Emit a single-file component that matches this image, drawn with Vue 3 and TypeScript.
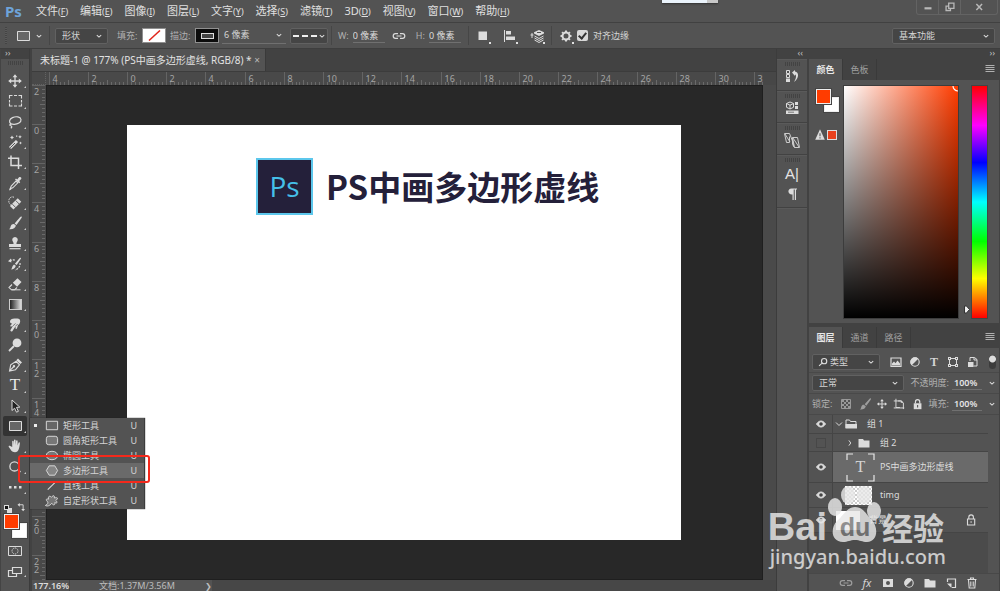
<script setup lang="ts">
import { computed, h, onBeforeUnmount, onMounted, ref } from 'vue'
import type { FunctionalComponent } from 'vue'

interface Shape {
  d: string
  fill?: string
  stroke?: string
  w?: number
  dash?: string
}

const LIGHT = '#dcdcdc'
const line = (d: string, w = 1, dash?: string): Shape => ({ d, fill: 'none', stroke: LIGHT, w, dash })
const solid = (d: string, fill = LIGHT): Shape => ({ d, fill })

const icons: Record<string, Shape[]> = {
  move: [line('M8 3v10M3 8h10', 1.3), solid('M8 1.2l2.4 3H5.6zM8 14.8l2.4-3H5.6zM1.2 8l3-2.4v4.8zM14.8 8l-3-2.4v4.8z')],
  marquee: [line('M2.5 5.5v-3h3M7 2.5h3M11.5 2.5h3v3M14.5 7v2.500M14.500 10.500v2.500h-3M10 13H7M5.500 13h-3v-2.500M2.500 9.500V7', 1.1)],
  lasso: [line('M4.200 9.800C1.600 8.500 2 5.200 5.500 3.600 9 2 13.500 2.700 14 5.500c.4 3-3.500 5-7.200 4.800-2-.1-3.800-.6-4 .5-.2 1.300 2.300.7 2 2-.1.700-.6 1.100-1 1.400', 1.2)],
  wand: [line('M3 14L10 7', 3), { d: 'M3.200 13.800L8 9', fill: 'none', stroke: '#535353', w: 1 }, solid('M5 1.500l.7 1.300 1.300.7-1.300.7L5 5.500l-.7-1.300L3 3.500l1.300-.7zM13 1l.6 1.200 1.200.6-1.200.6L13 4.600l-.6-1.200-1.200-.6 1.200-.6zM13.500 7.500l.5 1 1 .5-1 .5-.5 1-.5-1-1-.5 1-.5zM9 1.500h1.300v1.300H9z')],
  crop: [line('M4 1.500V11.500H15M1 4.200h10.500V15', 1.5)],
  eyedropper: [line('M9 6l1.800 1.800-5 5-2.600 1 1-2.700z', 1.1), solid('M2 15.500l1-2.500 1.500 1.500zM8 4.500l1-1 1.200 1L12 2.300c1.400-1.200 3.300.6 2 2L12.200 6l1 1.200-1 1z')],
  heal: [line('M7 2.200C4 1 1.500 3.500 1.800 6.500c.1 1.500 1 2.500 1.700 3', 1, '1.500 1'), line('M4.700 12.700L12.500 4.900', 5), { d: 'M5.200 9l3.600 3.600M8.700 5.500l3.500 3.500M7 8.700h.1M9 8.600h.1M8.500 10.300h.1', fill: 'none', stroke: '#606060', w: 1 }],
  brush: [solid('M14.500 1.500c.5.300.4.900 0 1.600L9.500 10 7.600 8.400 13 2.200c.5-.6 1-.9 1.500-.7zM7 9l1.900 1.600C8.500 13.300 5.500 14.700 2 14.200c1.500-.8 1.300-1.700 1.700-2.900C4.300 9.500 5.500 8.800 7 9z')],
  stamp: [solid('M8 2a2.800 2.800 0 0 1 2.200 4.500c-.7.900-.8 1.500-.7 2.500H14v3H2V9h4.500c.1-1 0-1.600-.7-2.500A2.800 2.800 0 0 1 8 2z'), line('M2.500 13.700h11', 1.2)],
  history: [solid('M13.700 1.800c.5.300.3.800 0 1.300l-4 6-1.800-1.300 4.600-5.500c.4-.5.8-.7 1.200-.5zM7 8.500l1.800 1.300c-.3 2.300-2.500 3.600-4.700 3.700 1.200-1 .9-3.800 2.900-5zM1 5.200l3-2.700.4 4z'), line('M3 5c2-1.500 4-1.500 5.500-.5M13 7c.5 3-1.500 6-5 7', 1.2, '2 1')],
  eraser: [line('M5 8.500l-3 3 2.500 2.300h3L10 11.500', 1.1), solid('M10.500 2.300l4 3.800-4.400 4.600-4.300-4z'), line('M4.500 13.800h9', 1)],
  smudge: [solid('M3 4.500c0-2 2-2.800 4.500-3 2.500-.2 5 0 5.500 1.500.6 2-.3 4-2 5.200l-1 3c-.3 1-1.500.9-1.500 0l.2-2.300-3.200 5c-.7 1-2.600.5-2-.9L6 8.700l-1.500.8c-1 .5-1.600-.7-.9-1.300l1.700-1.700C4 6.500 3 6 3 4.500z'), { d: 'M6 8.800l2.500-2.300M8.700 9l2-2', fill: 'none', stroke: '#606060', w: 0.8 }],
  dodge: [solid('M10 1.500a4.400 4.400 0 1 1 0 8.800 4.400 4.400 0 0 1 0-8.800z'), line('M7 9L2 14', 1.8)],
  pen: [line('M2.500 14l1.200-6.200 5.500-3.500 3.300 3.500-4 4.900zM2.800 13.600L7.300 9', 1.1), solid('M9.300 3.200l1.700-1.700 4 4-1.700 1.600zM7 8a1.200 1.200 0 1 1 0 2.400A1.200 1.200 0 0 1 7 8z')],
  arrow: [{ d: 'M5 2v10.500l2.600-2.300 1.900 4 1.900-.9-1.900-3.900 3.300-.3z', fill: '#222', stroke: LIGHT, w: 1 }],
  rect: [{ d: 'M2.500 3.500h12v9h-12z', fill: '#666', stroke: LIGHT, w: 1 }],
  hand: [solid('M5.200 9V3.600c0-1 1.400-1 1.500 0L7 7V2.300c0-1 1.500-1 1.600 0V7l.5-4c.1-1 1.500-.9 1.500.1v4.500l.9-2.800c.3-.9 1.500-.6 1.400.4-.4 4-1 9-4.900 9-3.500 0-4-2.400-6.200-5.200-.6-.9.600-1.600 1.400-1z')],
  zoom: [line('M7.500 2.800a4.600 4.600 0 1 1 0 9.200 4.600 4.600 0 0 1 0-9.200zM11 10.500l2.500 2.500', 1.3)],
  dots: [solid('M2 7h2.500v2.500H2zM7 7h2.500v2.500H7zM12 7h2.500v2.500H12z')],
  mask: [line('M1.500 3.500h13v9h-13z', 1), line('M8 5a3 3 0 1 1 0 6 3 3 0 0 1 0-6z', 1, '1.200 .8')],
  screen: [line('M5.500 3.500h9v6h-9z', 1.2), line('M5.500 6.500h-4v6h8v-3', 1.2)],
  roundrect: [{ d: 'M5 3.500h7q2.500 0 2.500 2.500v4q0 2.500-2.500 2.500H5q-2.500 0-2.500-2.500V6q0-2.500 2.500-2.500z', fill: '#777', stroke: LIGHT, w: 1 }],
  ellipse: [{ d: 'M8.500 3.500c8 0 8 9 0 9s-8-9 0-9z', fill: '#777', stroke: LIGHT, w: 1 }],
  polygon: [{ d: 'M5.500 3h6l3 5-3 5h-6l-3-5z', fill: '#868686', stroke: LIGHT, w: 1 }],
  diag: [line('M4 12.500l9-9', 1.1)],
  custom: [{ d: 'M8 4.500c2-2.500 3.500-2 3 .8 4-1 4.500.5 1.500 2.700 2.500 2 1.500 3.200-1 2.200.5 3-1.500 3.300-3.300.8-2.200 3-5 3.300-6.700 2.300C4 12 4.800 10.500 3.500 9 1.500 7 2.500 6 5 6.500 4 3.500 6 2.500 8 4.500z', fill: '#777', stroke: LIGHT, w: 1 }],
  chain: [line('M7 5.700H4.500a2.300 2.300 0 0 0 0 4.600H7M9 5.700h2.500a2.300 2.300 0 0 1 0 4.600H9M5.500 8h5', 1.2)],
  square: [solid('M3.500 3.500h8.500V12H3.500z')],
  align: [line('M2.500 2v12', 1), solid('M4 3h5v3.500H4zM4 8.500h9V12H4z')],
  arrange: [line('M3 5v5M1.500 7h3', 1), solid('M10 2l5 2.200v1.300L10 8 5 5.500V4.200z'), { d: 'M8 4.500h4', fill: 'none', stroke: '#535353', w: 1 }, line('M5.500 8L10 10.500 14.500 8M5.500 10l4.500 2.500 4.500-2.500M5.500 12l4.500 2.500 4.500-2.500', 1)],
  gear: [line('M8 4.500a3.500 3.500 0 1 1 0 7 3.500 3.500 0 0 1 0-7z', 2), line('M8 2.500V4M8 12v1.500M2.500 8H4M12 8h1.500M4.100 4.100l1 1M10.900 10.900l1 1M4.100 11.900l1-1M10.900 5.100l1-1', 2)],
  versions: [line('M2.500 2.500h3v3h-3zM2.500 6.500h3v3h-3z', 1), solid('M2 10.500h4V14H2zM8 4.500L11 2v1.500c4 .5 4.500 6.500-1 10.500 2.500-4 2.500-7 1-7.500V8z')],
  props: [line('M6 2l3.500 1.500v3.800L6 9 2.500 7.300V3.500zM2.500 3.500L6 5.200l3.500-1.700M6 5.200V9', 1), solid('M11 2h3v3h-3zM11 6h3v3h-3z'), solid('M2 10.500h12.500v3.500H2z'), { d: 'M4 12.200h6', fill: 'none', stroke: '#777', w: 1 }],
  para: [solid('M7.500 2.500H13v1h-1V14h-1.200V3.500H9.700V14H8.500V8.500C3.500 9 3 2.500 7.500 2.500z')],
  image: [line('M3 4h10v8.500H3z', 1.2), solid('M4 11.500V9.500l2-2 1.500 1.700 2-2.700L12 9.500v2z')],
  contrast: [line('M8 3.800a4.200 4.200 0 1 1 0 8.400 4.200 4.200 0 0 1 0-8.400z', 1.1), solid('M11.300 4.700a4.400 4.400 0 0 0-6.600 6.600z')],
  transform: [line('M4.500 4.500h7v7h-7z', 1), solid('M3 3h3v3H3zM10 3h3v3h-3zM3 10h3v3H3zM10 10h3v3h-3z'), solid('M4 4h1v1H4zM11 4h1v1h-1zM4 11h1v1H4zM11 11h1v1h-1z', '#535353')],
  smart: [line('M6 7V3.500h4.500l2.500 2V12H9.500M10 3.500V6h3', 1), solid('M4 8h5.500v5H4z')],
  checker: [{ d: 'M3.500 3.500h9v9h-9z', fill: 'none', stroke: '#999', w: 1 }, solid('M4 4h2v2H4zM8 4h2v2H8zM6 6h2v2H6zM10 6h2v2h-2zM4 8h2v2H4zM8 8h2v2H8zM6 10h2v2H6zM10 10h2v2h-2z', '#999')],
  board: [line('M4.500 2v10H9M2 4.500h8M7 4.500h3.500l2.500 2.300v7M2 12.500h12', 1.1), solid('M10 3.500l3.200 3.200H10z')],
  lock: [line('M5.800 7V5.200a2.300 2.300 0 0 1 4.600 0V7', 1.3), solid('M4 6.700h8.200v6.300H4z'), solid('M7.500 8.500h1.200v2.700H7.500z', '#555')],
  lockline: [line('M5.800 7V5.200a2.300 2.300 0 0 1 4.600 0V7M4.500 7h7.200v6H4.500zM8.100 9.200v1.600', 1.1)],
  eye: [{ d: 'M3.500 8c2.500-4 6.500-4 9 0-2.500 4-6.500 4-9 0z', fill: LIGHT, stroke: LIGHT, w: 1 }, solid('M8 6.200a1.800 1.800 0 1 1 0 3.600 1.800 1.800 0 0 1 0-3.600z', '#444')],
  folder: [solid('M2.500 4h4.500l1 1.500h5.500V12.500h-11z')],
  open: [line('M3 12V4h3.500l1 1.500h5.500V8', 1), solid('M2.500 8h11.500v4.500H2.500z')],
  search: [line('M9.300 4a3 3 0 1 1 0 6 3 3 0 0 1 0-6zM7 9.200L3.500 12.500', 1.3)],
  addmask: [{ d: 'M3 4h10v8H3zM8 6a2 2 0 1 0 0 4 2 2 0 0 0 0-4z', fill: LIGHT }],
  newlayer: [line('M4.500 7V4h8v8.500H9', 1.2), solid('M4 8.500h4.500v4.500z')],
  trash: [line('M3.500 4.500h9M6.500 4V3h3v1M4.500 5l.7 8h5.600l.7-8M6.800 6.500v5M9.200 6.500v5', 1.1)],
  menu: [{ d: 'M3.500 4.500h9M3.500 6.500h9M3.500 8.500h9M3.500 10.500h9', fill: 'none', stroke: '#b0b0b0', w: 1 }],
  chev: [line('M5.500 7L8 9.300 10.500 7', 1.2)],
  chevr: [line('M6.500 4.500L9 8l-2.500 3.500', 1.3)],
  chevd: [line('M4 6l4 4 4-4', 1.3)],
  swap: [line('M4 5h5.500v6', 1.2), solid('M5 2.500v5L2 5zM7 10.500h5l-2.500 3z')],
  warn: [solid('M8 1.500l5.500 12h-11z'), { d: 'M8 6v3.500M8 10.500V12', fill: 'none', stroke: '#535353', w: 1.2 }],
  min: [{ d: 'M4 9.500h8', fill: 'none', stroke: '#b8b8b8', w: 2.5 }],
  restore: [{ d: 'M6.500 3.500h6v6h-6zM6 7H3.500v5h5v-2', fill: 'none', stroke: '#b8b8b8', w: 1.5 }],
  close: [{ d: 'M5 4.500l6.500 7M11.500 4.500l-6.500 7', fill: 'none', stroke: '#b8b8b8', w: 1.7 }],
}

const Icon: FunctionalComponent<{ name: string; size?: number }> = (props) =>
  h(
    'svg',
    { viewBox: '0 0 16 16', width: props.size ?? 16, height: props.size ?? 16, 'aria-hidden': 'true' },
    icons[props.name].map((s) =>
      h('path', { d: s.d, fill: s.fill, 'fill-rule': 'evenodd', stroke: s.stroke, 'stroke-width': s.w, 'stroke-dasharray': s.dash }),
    ),
  )
Icon.props = ['name', 'size']

const menus = [
  ['文件', 'F'], ['编辑', 'E'], ['图像', 'I'], ['图层', 'L'], ['文字', 'Y'], ['选择', 'S'],
  ['滤镜', 'T'], ['3D', 'D'], ['视图', 'V'], ['窗口', 'W'], ['帮助', 'H'],
]

const tools = [
  'move', 'marquee', 'lasso', 'wand', 'crop', 'eyedropper', 'heal', 'brush', 'stamp', 'history', 'eraser',
  'gradient', 'smudge', 'dodge', 'pen', 'type', 'arrow', 'rect', 'hand', 'zoom', 'dots',
]

const shapeTools = [
  { icon: 'rect', label: '矩形工具' },
  { icon: 'roundrect', label: '圆角矩形工具' },
  { icon: 'ellipse', label: '椭圆工具' },
  { icon: 'polygon', label: '多边形工具' },
  { icon: 'diag', label: '直线工具' },
  { icon: 'custom', label: '自定形状工具' },
]

const snap = ref(true)

// Ruler scale: document units to screen pixels.
const UNIT = 19.6
const stage = ref<HTMLElement | null>(null)
const extent = ref({ w: 0, h: 0 })
const measure = () => {
  if (stage.value) extent.value = { w: stage.value.offsetWidth, h: stage.value.offsetHeight }
}
onMounted(() => {
  measure()
  window.addEventListener('resize', measure)
})
onBeforeUnmount(() => window.removeEventListener('resize', measure))

const rulerMarks = (length: number, origin: number) => {
  const marks: { pos: number; len: number; label: string }[] = []
  const first = Math.floor((-origin / UNIT) * 5)
  const last = Math.floor(((length - origin) / UNIT) * 5)
  for (let i = first; i <= last; i++) {
    const major = i % 10 === 0
    marks.push({
      pos: Math.round(origin + (i / 5) * UNIT) + 0.5,
      len: major ? 13 : i % 5 === 0 ? 5 : 3,
      label: major ? String(Math.abs(i / 5)) : '',
    })
  }
  return marks
}
const hMarks = computed(() => rulerMarks(extent.value.w, 81))
const vMarks = computed(() => rulerMarks(extent.value.h, 39))
</script>

<template>
  <div class="app">
    <header class="menubar">
      <span class="brand">Ps</span>
      <nav class="menus">
        <button v-for="m in menus" :key="m[0]" type="button">{{ m[0] }}<small>(<u>{{ m[1] }}</u>)</small></button>
      </nav>
      <div class="winbtns">
        <button type="button" aria-label="最小化"><Icon name="min" :size="14" /></button>
        <button type="button" aria-label="还原"><Icon name="restore" :size="14" /></button>
        <button type="button" class="wide" aria-label="关闭"><Icon name="close" :size="14" /></button>
      </div>
      <i class="peek"></i>
    </header>

    <div class="options">
      <i class="vgrip"></i>
      <button type="button" class="preset" aria-label="工具预设"><Icon name="rect" /><Icon name="chev" :size="14" /></button>
      <i class="sep"></i>
      <span class="drop shape">
        <select aria-label="工具模式"><option>形状</option></select><Icon name="chev" :size="14" />
      </span>
      <span class="cap">填充:</span>
      <button type="button" class="swatch none" aria-label="填充">
        <svg width="19" height="11" viewBox="0 0 19 11"><path d="M4 10.500L15 .5" stroke="#e0261c" stroke-width="1.500" /></svg>
      </button>
      <span class="cap">描边:</span>
      <button type="button" class="swatch stroke" aria-label="描边"><i></i></button>
      <span class="field size"><input value="6 像素" aria-label="描边宽度" /><Icon name="chev" :size="14" /></span>
      <button type="button" class="dash" aria-label="描边类型">
        <svg width="24" height="4" viewBox="0 0 24 4"><path d="M0 2h24" stroke="#eee" stroke-width="2" stroke-dasharray="6 3" /></svg>
        <Icon name="chev" :size="14" />
      </button>
      <i class="sep"></i>
      <label class="dim">W: <input value="0 像素" /></label>
      <span class="link"><Icon name="chain" /></span>
      <label class="dim">H: <input value="0 像素" /></label>
      <i class="sep"></i>
      <button type="button" class="op" aria-label="路径操作"><Icon name="square" /></button>
      <button type="button" class="op" aria-label="路径对齐"><Icon name="align" /></button>
      <button type="button" class="op last" aria-label="路径排列"><Icon name="arrange" /></button>
      <i class="sep"></i>
      <button type="button" class="op gear" aria-label="设置"><Icon name="gear" /></button>
      <label class="snap"><input v-model="snap" type="checkbox" /> 对齐边缘</label>
      <span class="drop workspace">
        <select aria-label="工作区"><option>基本功能</option></select><Icon name="chev" :size="14" />
      </span>
    </div>

    <div class="body">
      <aside class="tools">
        <div class="dockhead left">››</div>
        <i class="grip"></i>
        <div class="toollist">
          <button v-for="t in tools" :key="t" type="button" :class="{ on: t === 'rect' }" :aria-label="t">
            <i v-if="t === 'gradient'" class="grad"></i>
            <span v-else-if="t === 'type'" class="tee">T</span>
            <Icon v-else :name="t" />
          </button>
        </div>
        <div class="swaprow"><i class="mini"></i><Icon name="swap" :size="12" /></div>
        <div class="colors"><i class="bg"></i><i class="fg"></i></div>
        <button type="button" class="mode" aria-label="快速蒙版"><Icon name="mask" /></button>
        <button type="button" class="mode more" aria-label="屏幕模式"><Icon name="screen" /></button>
      </aside>

      <main class="doc">
        <div class="tabbar">
          <div class="tab">未标题-1 @ 177% (PS中画多边形虚线, RGB/8) * <button type="button" aria-label="关闭">×</button></div>
        </div>
        <div class="work">
          <i class="corner"></i>
          <svg class="hruler">
            <g v-for="m in hMarks" :key="m.pos">
              <line :x1="m.pos" :x2="m.pos" :y1="13 - m.len" y2="13" :stroke="m.label ? '#646464' : '#6a6a6a'" />
              <text v-if="m.label" :x="m.pos + 3" y="10">{{ m.label }}</text>
            </g>
          </svg>
          <i class="scrolltop"></i>
          <div class="vwrap">
            <svg class="vruler">
              <g v-for="m in vMarks" :key="m.pos">
                <line :x1="13 - m.len" x2="13" :y1="m.pos" :y2="m.pos" :stroke="m.label ? '#646464' : '#6a6a6a'" />
                <text v-for="(c, i) in m.label.split('')" :key="i" x="2" :y="m.pos + 9 + i * 8">{{ c }}</text>
              </g>
            </svg>
          </div>
          <div ref="stage" class="stage">
            <div class="artboard">
              <span class="logo">Ps</span>
              <h1>PS中画多边形虚线</h1>
            </div>
          </div>
          <i class="scroll"></i>
        </div>
        <footer class="status"><b>177.16%</b><span>文档:1.37M/3.56M</span><em>❯</em></footer>
      </main>

      <aside class="dock">
        <div class="dockhead right">‹‹</div>
        <section><i class="grip"></i><button type="button" aria-label="历史记录"><Icon name="versions" /></button></section>
        <section><i class="grip"></i><button type="button" aria-label="属性"><Icon name="props" /></button></section>
        <section>
          <i class="grip"></i>
          <button type="button" aria-label="信息">
            <svg width="18" height="18" viewBox="0 0 18 18"><path d="M1.500 1.500h5l4 10v3M1.500 1.500l2 9h3v-6M2 2l5 8M9.500 5.500h5l2 10h-5zM9.500 5.500v7l2 3M10 6l6 9" fill="none" stroke="#ccc" /></svg>
          </button>
        </section>
        <section class="two"><i class="grip"></i><button type="button" aria-label="字符" class="chr">A|</button><button type="button" aria-label="段落"><Icon name="para" /></button></section>
        <section class="rest"></section>
      </aside>

      <aside class="panels">
        <div class="dockhead right">››</div>
        <section class="panel">
          <div class="tabs"><button type="button" class="on">颜色</button><button type="button">色板</button><Icon name="menu" class="pmenu" /></div>
          <div class="colorbody">
            <div class="picks">
              <div class="colors"><i class="bg"></i><i class="fg"></i></div>
              <div class="gamut"><Icon name="warn" :size="14" /><i></i></div>
            </div>
            <div class="field2d"><svg width="6" height="6" viewBox="0 0 6 6"><path d="M1 0a5 5 0 0 0 5 5" fill="none" stroke="#fff" stroke-width="1.200" /></svg></div>
            <div class="pointer"><svg width="7" height="9" viewBox="0 0 7 9"><path d="M1.500 1h2l3 3.500-3 3.500h-2z" fill="#eee" stroke="#333" /></svg></div>
            <div class="hue"></div>
          </div>
        </section>
        <section class="panel layers">
          <div class="tabs"><button type="button" class="on">图层</button><button type="button">通道</button><button type="button">路径</button><Icon name="menu" class="pmenu" /></div>
          <div class="row first">
            <span class="drop filter"><Icon name="search" :size="14" /><select aria-label="筛选"><option>类型</option></select><Icon name="chev" :size="14" /></span>
            <span class="filters"><Icon name="image" /><Icon name="contrast" /><b>T</b><Icon name="transform" /><Icon name="smart" /></span>
            <i class="toggle"></i>
          </div>
          <div class="row">
            <span class="drop blend"><select aria-label="混合模式"><option>正常</option></select><Icon name="chev" :size="14" /></span>
            <label class="pct">不透明度: <input value="100%" /><Icon name="chev" :size="14" /></label>
          </div>
          <div class="row">
            <span class="cap">锁定:</span>
            <span class="locks"><Icon name="checker" :size="16" /><Icon name="brush" class="dim2" :size="14" /><Icon name="move" :size="12" /><Icon name="board" :size="14" /><Icon name="lock" :size="15" /></span>
            <label class="pct">填充: <input value="100%" /><Icon name="chev" :size="14" /></label>
          </div>
          <div class="list">
            <div class="layer g1"><span class="vis"><Icon name="eye" /></span><Icon name="chevd" :size="12" /><Icon name="open" /><p>组 1</p></div>
            <div class="layer g2"><span class="vis"><i class="off"></i></span><Icon name="chevr" :size="12" /><Icon name="folder" /><p>组 2</p></div>
            <div class="layer sel">
              <span class="vis"><Icon name="eye" /></span>
              <span class="tthumb"><svg width="29" height="29" viewBox="0 0 29 29"><path d="M1 7V1h6M22 1h6v6M28 22v6h-6M7 28H1v-6" fill="none" stroke="#e6e6e6" stroke-width="1.200" /></svg><b>T</b></span>
              <p>PS中画多边形虚线</p>
            </div>
            <div class="layer img"><span class="vis"><Icon name="eye" /></span><i class="thumb"></i><p>timg</p></div>
            <div class="layer back"><span class="vis"><Icon name="eye" /></span><i class="thumb"></i><p>背景</p><Icon name="lockline" class="lk" /></div>
          </div>
          <div class="foot">
            <Icon name="chain" class="dim2" /><em>fx</em><Icon name="addmask" /><Icon name="contrast" /><Icon name="folder" /><Icon name="newlayer" /><Icon name="trash" />
          </div>
        </section>
      </aside>
    </div>

    <div class="flyout" role="menu">
      <button v-for="(s, i) in shapeTools" :key="s.label" type="button" role="menuitem" :class="{ hot: i === 3 }">
        <i :class="{ cur: i === 0 }"></i><Icon :name="s.icon" :size="15" /><span>{{ s.label }}</span><kbd>U</kbd>
      </button>
    </div>
    <div class="callout"></div>

    <div class="mark">
      <div class="markline">
        <span>Bai</span>
        <svg width="54" height="60" viewBox="0 0 54 60">
          <g fill="#e8e8e8">
            <ellipse cx="21" cy="9" rx="7" ry="9" /><ellipse cx="37" cy="9" rx="7" ry="9" />
            <ellipse cx="8" cy="21" rx="7" ry="9" /><ellipse cx="47" cy="25" rx="7" ry="9" />
            <path d="M28 21c8 0 11 7 16 12 8 8 7 23-4 23-5 0-7-2-12-2s-7 2-12 2C4 56 3 42 10 35c6-5 10-14 18-14z" />
          </g>
          <text x="28" y="50" text-anchor="middle">du</text>
        </svg>
        <span class="cn">经验</span>
      </div>
      <div class="url">jingyan.baidu.com</div>
    </div>
  </div>
</template>

<style>
body {
  background: #535353;
}
</style>

<style scoped>
.app {
  position: relative;
  display: flex;
  flex-direction: column;
  height: 100vh;
  overflow: hidden;
  background: #424242;
  color: #d4d4d4;
  font-family: "Noto Sans", "Noto Sans CJK SC", sans-serif;
  font-size: 9px;
  line-height: 14px;
}
* { box-sizing: border-box; }
button, input, select {
  font: inherit;
  color: inherit;
  margin: 0;
  padding: 0;
  border: 0;
  background: none;
  border-radius: 0;
  outline: 0;
}
select { appearance: none; }
svg { display: block; flex: none; }
i, em { font-style: normal; flex: none; }
p, h1 { margin: 0; }

.menubar {
  display: flex;
  height: 23px;
  flex: none;
  background: #535353;
  border-bottom: 1px solid #414141;
}
.brand { width: 36px; padding-left: 5px; color: #6ea3da; font-size: 15px; font-weight: 700; line-height: 22px; }
.menus { display: flex; flex: 1; gap: 12px; }
.menus button { font-size: 11px; line-height: 22px; color: #e0e0e0; white-space: nowrap; }
.menus small { font-size: 9px; }
.winbtns { display: flex; height: 15px; margin-right: 2px; border: 1px solid #636363; border-top: 0; border-radius: 0 0 3px 3px; }
.winbtns button { display: grid; place-items: center; width: 22px; border-right: 1px solid #636363; }
.winbtns .wide { width: 36px; border: 0; }
.peek { position: absolute; left: 662px; top: 0; width: 56px; height: 3px; background: linear-gradient(90deg, #eaf3fb 80%, #c8c8c8 80%); box-shadow: 0 1px 2px #333; }

.options { display: flex; align-items: center; height: 26px; flex: none; background: #535353; border-bottom: 1px solid #3e3e3e; }
.vgrip { width: 2px; height: 17px; margin-left: 5px; background: repeating-linear-gradient(#444 0 1px, #5a5a5a 1px 2px); }
.preset { display: flex; align-items: center; margin-left: 8px; gap: 1px; }
.sep { width: 1px; height: 19px; margin: 0 6px 0 3px; background: #464646; }
.preset + .sep { margin-right: 5px; }
.drop { display: grid; align-items: center; height: 16px; background: #454545; border: 1px solid #616161; border-radius: 2px; }
.drop > * { grid-area: 1 / 1; }
.drop select { width: 100%; padding-left: 6px; }
.drop > svg:last-child { justify-self: end; pointer-events: none; margin-right: 1px; }
.shape { width: 53px; margin-right: 9px; }
.cap { color: #b0b0b0; white-space: nowrap; }
.options .cap { width: 22px; }
.swatch { display: grid; place-items: center; width: 24px; height: 15px; margin: 0 4px 0 3px; border: 1px solid #909090; }
.none { background: #fff; }
.stroke { background: #0c0c0c; margin-right: 3px; }
.stroke i { width: 13px; height: 6px; border: 1px solid #ddd; background: #444; }
.field { display: flex; align-items: center; border-bottom: 1px solid #707070; height: 16px; }
.size { width: 64px; margin-right: 4px; }
.size input { flex: 1; min-width: 0; padding-left: 2px; }
.dash { display: flex; align-items: center; width: 38px; height: 16px; padding-left: 2px; background: #454545; border: 1px solid #616161; border-radius: 2px; }
.dash svg:last-child { margin-left: -2px; }
.dim { display: flex; align-items: center; color: #b0b0b0; gap: 4px; }
.dim input { width: 32px; height: 15px; color: #dcdcdc; border-bottom: 1px solid #707070; }
.link { margin: 0 9px 0 6px; }
.dim + .sep { margin-left: 7px; }
.op { position: relative; margin-right: 11px; }
.last { margin-right: 3px; }
.op::after { content: ""; position: absolute; right: 0; bottom: 0; width: 2px; height: 2px; background: #e0e0e0; }
.gear { margin-right: 3px; }
.snap { display: flex; align-items: center; gap: 5px; }
.snap input { appearance: none; width: 11px; height: 11px; border-radius: 2px; background: #d8d8d8; display: grid; place-items: center; }
.snap input:checked::after { content: ""; width: 3px; height: 6px; border: solid #333; border-width: 0 2px 2px 0; transform: rotate(40deg); margin-bottom: 2px; }
.workspace { width: 103px; margin: 0 5px 0 auto; }

.body { display: flex; flex: 1; min-height: 0; }
.dockhead { height: 10px; flex: none; line-height: 8px; background: #424242; color: #c0c0c0; }
.left { padding-left: 4px; }
.right { text-align: right; padding-right: 4px; }
.grip { display: block; width: 15px; height: 4px; margin: 2px auto 0; background: repeating-linear-gradient(90deg, #434343 0 1px, #535353 1px 2px); }

.tools { width: 30px; flex: none; background: #535353; border-right: 1px solid #3c3c3c; border-left: 1px solid #444; }
.toollist { display: grid; grid-template-rows: repeat(21, 1fr); height: 426px; margin-top: 6px; }
.toollist button, .mode { position: relative; display: grid; place-items: center; width: 24px; margin: 0 2px; }
.toollist .on { background: #333; border-radius: 2px; }
.toollist button::after, .more::after { content: ""; position: absolute; right: 1px; bottom: 3px; border: 1px solid; border-color: transparent #ccc #ccc transparent; }
.grad { width: 13px; height: 11px; border: 1px solid #ccc; background: linear-gradient(90deg, #222, #ddd); }
.tee { font: 17px/16px "Liberation Serif", serif; color: #e8e8e8; }
.swaprow { display: flex; gap: 3px; height: 17px; padding: 3px 0 0 3px; align-items: center; }
.mini { width: 5px; height: 5px; background: #111; border: 1px solid #ddd; box-shadow: 3px 3px 0 #ddd; margin-right: 4px; }
.colors { display: grid; width: 23px; height: 24px; margin-left: 3px; }
.colors i { grid-area: 1 / 1; width: 15px; height: 15px; border: 1px solid #eee; outline: 1px solid #444; }
.fg { background: #ff3c00; }
.colors .bg { background: #fff; place-self: end; }
.mode { margin-top: 5px; height: 16px; }

.doc { flex: 1; min-width: 0; display: flex; flex-direction: column; margin-left: 2px; }
.tabbar { height: 23px; flex: none; display: flex; background: #424242; border-bottom: 1px solid #3c3c3c; }
.tab { padding: 0 5px 0 8px; background: #535353; font-size: 10px; line-height: 22px; white-space: nowrap; color: #e2e2e2; border-right: 1px solid #3a3a3a; }
.tab button { color: #b8b8b8; }
.work { flex: 1; min-height: 0; display: grid; grid-template: 13px 1fr / 14px 1fr 13px; background: #494949; }
.corner { border: 1px dotted #626262; border-width: 0 1px 1px 0; }
.hruler { width: 100%; height: 13px; }
.hruler text, .vruler text { font-size: 9px; fill: #a4a4a4; }
.scrolltop { background: #474747; }
.vwrap { overflow: hidden; min-height: 0; }
.vruler { width: 13px; height: 100%; }
.stage { background: #282828; overflow: hidden; min-height: 0; border: 1px solid #1f1f1f; }
.scroll { background: #4a4a4a; }
.artboard { display: flex; width: 554px; height: 415px; margin: 39px 0 0 80px; padding: 33px 0 0 129px; background: #fff; }
.logo { width: 57px; height: 57px; border: 2px solid #5cc7ec; background: #24203a; color: #45bfe8; font: 28px/53px "Open Sans", sans-serif; text-align: center; }
h1 { margin-left: 13px; color: #24203a; font: 700 33px/56px "Noto Sans CJK SC", sans-serif; white-space: nowrap; }
.status { display: flex; height: 11px; flex: none; line-height: 12px; color: #bdbdbd; background: linear-gradient(90deg, #535353 180px, #474747 180px); }
.status b { width: 38px; padding-left: 1px; font-weight: 600; border-right: 1px solid #444; color: #ddd; }
.status span { width: 106px; margin-left: 29px; }
.status em { font-size: 8px; }

.dock { width: 31px; flex: none; display: flex; flex-direction: column; border-left: 1px solid #3c3c3c; }
.dock section { height: 31px; margin: 0 0 1px; background: #535353; display: flex; flex-direction: column; align-items: center; gap: 2px; flex: none; border-top: 1px solid #5a5a5a; }
.dock .two { height: 52px; }
.dock .rest { flex: 1; margin: 0; }
.chr { font: 15px/20px "Liberation Sans", sans-serif; color: #e4e4e4; }

.panels { width: 190px; margin: 0 1px 0 2px; flex: none; display: flex; flex-direction: column; }
.panel { background: #535353; }
.tabs { display: flex; height: 21px; background: #424242; }
.tabs button { width: 34px; line-height: 21px; color: #a0a0a0; border-right: 1px solid #3a3a3a; }
.tabs .on { background: #535353; color: #e8e8e8; font-weight: 700; }
.pmenu { margin: 2px 1px 0 auto; }
.colorbody { display: flex; height: 243px; padding: 5px 11px 4px 7px; }
.picks { width: 27px; margin-top: 4px; }
.picks .colors { margin: 0; height: 23px; }
.gamut { display: flex; align-items: center; margin: 16px 0 0 -3px; }
.gamut i { width: 10px; height: 10px; background: #e8401c; border: 1px solid #ddd; }
.field2d { display: flex; justify-content: flex-end; flex: 1; border: 1px solid #3c3c3c; background: linear-gradient(transparent, #000), linear-gradient(90deg, #fff, #ff3c00); }
.pointer { width: 12px; align-self: flex-end; padding: 0 0 5px 4px; }
.hue { width: 17px; border: 1px solid #444; background: linear-gradient(#f00, #f0f 17%, #00f 33%, #0ff 50%, #0f0 67%, #ff0 83%, #f00); }

.layers { flex: 1; min-height: 0; margin-top: 4px; display: flex; flex-direction: column; }
.layers > .tabs { flex: none; }
.row { display: flex; align-items: center; height: 21px; flex: none; padding: 0 3px; border-bottom: 1px solid #494949; }
.first { margin-top: 3px; height: 22px; }
.filter { width: 68px; }
.filter select { padding-left: 17px; }
.filter > svg:first-child { margin-left: 3px; }
.filters { display: flex; align-items: center; gap: 3px; margin-left: 8px; }
.filters b { width: 16px; text-align: center; font: 700 12px/14px "Liberation Serif", serif; }
.toggle { width: 7px; height: 14px; margin-left: auto; border-radius: 4px; background: radial-gradient(circle at 50% 4px, #ddd 3px, #3c3c3c 4px); }
.blend { width: 92px; }
.pct { display: flex; align-items: center; margin-left: auto; color: #b0b0b0; gap: 3px; white-space: nowrap; }
.pct input { width: 30px; height: 14px; color: #e4e4e4; font-weight: 600; padding-left: 2px; border-bottom: 1px solid #707070; }
.pct svg { margin-right: -3px; }
.locks { display: flex; align-items: center; gap: 4px; margin-left: 6px; }
.dim2 { opacity: .55; }
.list { flex: 1; min-height: 0; overflow: hidden; margin-right: 11px; background: #4b4b4b; }
.layer { display: flex; align-items: center; height: 18px; background: #535353; border-bottom: 1px solid #454545; }
.layer p { white-space: nowrap; color: #dcdcdc; }
.vis { display: grid; place-items: center; align-self: stretch; width: 24px; background: #535353; border-right: 1px solid #454545; }
.off { width: 10px; height: 10px; border: 1px solid #474747; }
.g1 { height: 19px; }
.g1 p { margin-left: 8px; }
.g1 svg + svg { margin-left: -2px; }
.g2 .vis { margin-right: 11px; }
.g2 p { margin-left: 8px; }
.sel { height: 31px; background: #6a6a6a; }
.tthumb { display: grid; place-items: center; margin: 0 5px 0 13px; }
.tthumb > * { grid-area: 1 / 1; }
.tthumb b { font: 16px/16px "Liberation Serif", serif; }
.img { height: 25px; }
.thumb { width: 27px; height: 19px; margin: 0 8px 0 12px; background: repeating-conic-gradient(#ccc 0 25%, #fff 0 50%) 0 0 / 4px 4px; }
.back { height: 25px; }
.back .thumb { width: 24px; margin: 0 9px 0 3px; background: #fff; }
.lk { margin: 0 9px 0 auto; }
.foot { display: flex; align-items: center; gap: 5px; height: 18px; flex: none; padding-left: 29px; border-top: 1px solid #484848; }
.foot em { width: 16px; text-align: center; font-style: italic; font-size: 11px; }

.flyout { position: absolute; left: 30px; top: 418px; width: 115px; padding-bottom: 1px; background: #535353; border-right: 1px solid #3c3c3c; box-shadow: 0 0 1px #222; }
.flyout button { display: flex; align-items: center; width: 100%; height: 15px; padding: 0 7px 0 4px; }
.flyout i { width: 3px; height: 3px; margin-right: 7px; }
.flyout .cur { background: #eee; }
.flyout span { flex: 1; text-align: left; padding-left: 4px; white-space: nowrap; }
.flyout kbd { font: inherit; }
.flyout .hot { background: #6a6a6a; }
.callout { position: absolute; left: 18px; top: 455px; width: 132px; height: 28px; border: 2px solid #f5291c; border-radius: 3px; }

.mark { position: absolute; right: 54px; bottom: 23px; color: #e8e8e8; opacity: .82; pointer-events: none; }
.markline { display: flex; align-items: flex-end; justify-content: flex-end; height: 60px; }
.markline span { font: 700 38px/38px "Liberation Sans", sans-serif; }
.markline .cn { font: 700 31px/38px "Noto Sans CJK SC", sans-serif; margin: 0 2px 0 1px; }
.markline text { font: 700 25px "Liberation Sans", sans-serif; fill: #777; }
.url { font: 500 20px/22px "Noto Sans", sans-serif; text-align: right; }
</style>
